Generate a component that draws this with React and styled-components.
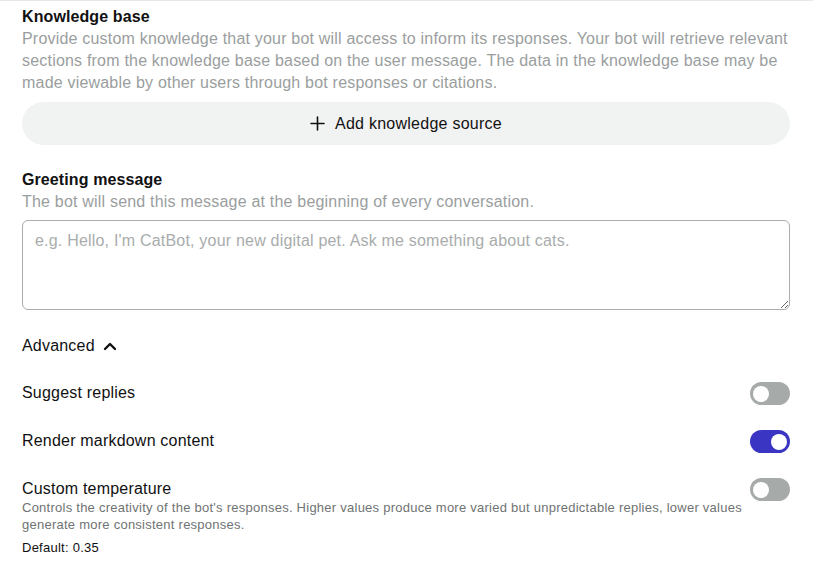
import React, { useState } from "react";
import styled, { createGlobalStyle } from "styled-components";

const Global = createGlobalStyle`
  html, body { margin: 0; padding: 0; background: #fff; }
  body { font-family: "Liberation Sans", Arial, sans-serif; color: #1a1a1a; letter-spacing: 0.2px; }
  * { box-sizing: border-box; }
`;

const Page = styled.div`
  border-top: 1px solid #e6e8e8;
  width: 813px;
  padding: 5px 23px 0 22px;
  display: flex;
  flex-direction: column;
`;

const Section = styled.section`
  display: flex;
  flex-direction: column;
  margin-top: ${(p) => p.$mt || 0}px;
`;

const Title = styled.h2`
  margin: 0;
  font-size: 16px;
  line-height: 22px;
  font-weight: 700;
  letter-spacing: 0.1px;
  color: #111;
`;

const Desc = styled.p`
  margin: 0;
  font-size: 16px;
  line-height: 22px;
  color: #9a9e9e;
`;

const AddButton = styled.button`
  margin-top: 8px;
  height: 43px;
  width: 100%;
  border: none;
  border-radius: 22px;
  background: #f1f2f2;
  display: flex;
  align-items: center;
  justify-content: center;
  gap: 10px;
  font-family: inherit;
  font-size: 16px;
  letter-spacing: 0.25px;
  color: #111;
  cursor: pointer;
`;

const TextArea = styled.textarea`
  margin-top: 7px;
  height: 90px;
  width: 100%;
  border: 1px solid #a8adad;
  border-radius: 6px;
  padding: 10px 12px;
  font-family: inherit;
  font-size: 16px;
  line-height: 20px;
  letter-spacing: 0.2px;
  resize: vertical;
  outline: none;
  &::placeholder { color: #a9acac; }
`;

const AdvancedToggle = styled.button`
  margin-top: 25px;
  align-self: flex-start;
  background: none;
  border: none;
  padding: 0;
  display: flex;
  align-items: center;
  gap: 8px;
  font-family: inherit;
  font-size: 16px;
  line-height: 22px;
  letter-spacing: 0.2px;
  color: #111;
  cursor: pointer;
`;

const Row = styled.div`
  margin-top: ${(p) => p.$mt}px;
  display: flex;
  justify-content: space-between;
  align-items: flex-start;
  gap: 8px;
`;

const RowText = styled.div`
  display: flex;
  flex-direction: column;
`;

const Label = styled.span`
  font-size: 16px;
  line-height: 22px;
  color: #111;
`;

const SmallDesc = styled.p`
  margin: -1px 0 0;
  font-size: 13px;
  line-height: 17px;
  letter-spacing: 0.25px;
  color: #6f7373;
`;

const SmallValue = styled.p`
  margin: 6px 0 0;
  font-size: 13px;
  line-height: 17px;
  letter-spacing: 0.25px;
  color: #111;
`;

const Switch = styled.button`
  flex: none;
  width: 40px;
  height: 23px;
  border: none;
  border-radius: 12px;
  padding: 0;
  background: ${(p) => (p.$on ? "#3b35c3" : "#a6abaa")};
  position: relative;
  cursor: pointer;
  &::after {
    content: "";
    position: absolute;
    top: 3.5px;
    left: ${(p) => (p.$on ? "21px" : "3px")};
    width: 16px;
    height: 16px;
    border-radius: 50%;
    background: #fff;
  }
`;

const Plus = () => (
  <svg width="15" height="15" viewBox="0 0 15 15" fill="none">
    <path d="M7.5 1v13M1 7.5h13" stroke="#111" strokeWidth="1.6" strokeLinecap="round" />
  </svg>
);

const ChevronUp = () => (
  <svg width="14" height="10" viewBox="0 0 14 10" fill="none">
    <path d="M2 8l5-5 5 5" stroke="#111" strokeWidth="2.4" strokeLinecap="round" strokeLinejoin="round" />
  </svg>
);

export default function App() {
  const [suggest, setSuggest] = useState(false);
  const [markdown, setMarkdown] = useState(true);
  const [temp, setTemp] = useState(false);
  return (
    <>
      <Global />
      <Page>
        <Section>
          <Title>Knowledge base</Title>
          <Desc>
            Provide custom knowledge that your bot will access to inform its responses. Your bot will retrieve relevant
            sections from the knowledge base based on the user message. The data in the knowledge base may be made
            viewable by other users through bot responses or citations.
          </Desc>
          <AddButton>
            <Plus />
            Add knowledge source
          </AddButton>
        </Section>
        <Section $mt={24}>
          <Title>Greeting message</Title>
          <Desc>The bot will send this message at the beginning of every conversation.</Desc>
          <TextArea placeholder="e.g. Hello, I'm CatBot, your new digital pet. Ask me something about cats." />
        </Section>
        <AdvancedToggle>
          Advanced
          <ChevronUp />
        </AdvancedToggle>
        <Row $mt={25}>
          <Label>Suggest replies</Label>
          <Switch $on={suggest} onClick={() => setSuggest(!suggest)} />
        </Row>
        <Row $mt={25}>
          <Label>Render markdown content</Label>
          <Switch $on={markdown} onClick={() => setMarkdown(!markdown)} />
        </Row>
        <Row $mt={25}>
          <RowText>
            <Label>Custom temperature</Label>
            <SmallDesc>
              Controls the creativity of the bot's responses. Higher values produce more varied but unpredictable
              replies, lower values generate more consistent responses.
            </SmallDesc>
            <SmallValue>Default: 0.35</SmallValue>
          </RowText>
          <Switch $on={temp} onClick={() => setTemp(!temp)} />
        </Row>
      </Page>
    </>
  );
}
